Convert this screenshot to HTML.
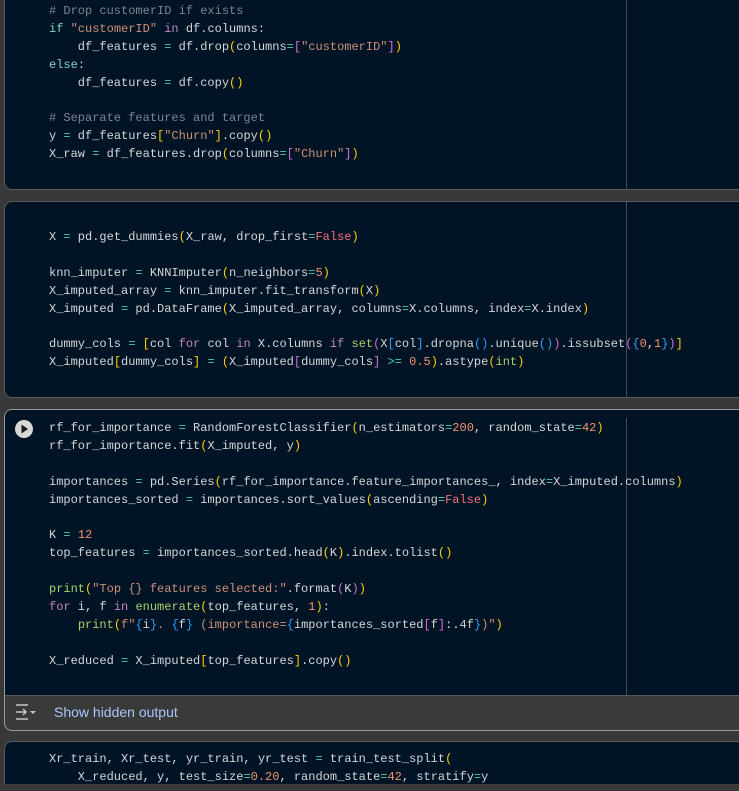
<!DOCTYPE html>
<html><head><meta charset="utf-8"><style>
html,body{margin:0;padding:0;background:#383838;width:739px;height:791px;overflow:hidden;position:relative}
.cell{position:absolute;left:4px;width:760px;background:#001426;border:1px solid #5a5a5a;border-radius:8px;box-sizing:border-box}
.sel{border-color:#9a9a9a}
pre{position:absolute;left:44px;margin:0;font-family:"Liberation Mono",monospace;font-size:12px;line-height:17.9px;color:#d6d6d6;white-space:pre}
.vl{position:absolute;left:621px;width:1px;background:#4a4a4a}
.c{color:#7c858f}.s{color:#ce9178}.n{color:#f0946a}.o{color:#4ec9b0}.y{color:#ffd000}.p{color:#d670d6}.bl{color:#2a9fff}.kw{color:#c586c0}.k{color:#7fd1c7}.f{color:#f0707c}.g{color:#a6d16c}
</style></head><body>
<div class="cell" style="top:-10px;height:200px"><div class="vl" style="top:0;height:200px"></div>
<pre style="top:12px"><span class="c"># Drop customerID if exists</span>
<span class="k">if</span> <span class="s">"customerID"</span> <span class="kw">in</span> df.columns:
    df_features <span class="o">=</span> df.drop<span class="y">(</span>columns<span class="o">=</span><span class="p">[</span><span class="s">"customerID"</span><span class="p">]</span><span class="y">)</span>
<span class="k">else</span>:
    df_features <span class="o">=</span> df.copy<span class="y">()</span>

<span class="c"># Separate features and target</span>
y <span class="o">=</span> df_features<span class="y">[</span><span class="s">"Churn"</span><span class="y">]</span>.copy<span class="y">()</span>
X_raw <span class="o">=</span> df_features.drop<span class="y">(</span>columns<span class="o">=</span><span class="p">[</span><span class="s">"Churn"</span><span class="p">]</span><span class="y">)</span></pre></div>

<div class="cell" style="top:201px;height:197px"><div class="vl" style="top:0;height:197px"></div>
<pre style="top:27px">X <span class="o">=</span> pd.get_dummies<span class="y">(</span>X_raw, drop_first<span class="o">=</span><span class="f">False</span><span class="y">)</span>

knn_imputer <span class="o">=</span> KNNImputer<span class="y">(</span>n_neighbors<span class="o">=</span><span class="n">5</span><span class="y">)</span>
X_imputed_array <span class="o">=</span> knn_imputer.fit_transform<span class="y">(</span>X<span class="y">)</span>
X_imputed <span class="o">=</span> pd.DataFrame<span class="y">(</span>X_imputed_array, columns<span class="o">=</span>X.columns, index<span class="o">=</span>X.index<span class="y">)</span>

dummy_cols <span class="o">=</span> <span class="y">[</span>col <span class="kw">for</span> col <span class="kw">in</span> X.columns <span class="kw">if</span> <span class="g">set</span><span class="p">(</span>X<span class="bl">[</span>col<span class="bl">]</span>.dropna<span class="bl">()</span>.unique<span class="bl">()</span><span class="p">)</span>.issubset<span class="p">(</span><span class="bl">{</span><span class="n">0</span>,<span class="n">1</span><span class="bl">}</span><span class="p">)</span><span class="y">]</span>
X_imputed<span class="y">[</span>dummy_cols<span class="y">]</span> <span class="o">=</span> <span class="y">(</span>X_imputed<span class="p">[</span>dummy_cols<span class="p">]</span> <span class="o">&gt;=</span> <span class="n">0.5</span><span class="y">)</span>.astype<span class="y">(</span><span class="g">int</span><span class="y">)</span></pre></div>

<div class="cell sel" style="top:409px;height:322px;background:#3a3a3a">
<div style="position:absolute;left:0;top:0;right:0;height:285px;background:#001426;border-radius:7px 7px 0 0;border-bottom:1px solid #5a5a5a"></div>
<div class="vl" style="top:8px;height:277px"></div>
<svg style="position:absolute;left:9px;top:9px" width="20" height="20" viewBox="0 0 20 20"><circle cx="10" cy="10" r="9" fill="#d8d8d8"/><path d="M7.5 5.5 L14 10 L7.5 14.5 Z" fill="#1a1a1a"/></svg>
<pre style="top:10px">rf_for_importance <span class="o">=</span> RandomForestClassifier<span class="y">(</span>n_estimators<span class="o">=</span><span class="n">200</span>, random_state<span class="o">=</span><span class="n">42</span><span class="y">)</span>
rf_for_importance.fit<span class="y">(</span>X_imputed, y<span class="y">)</span>

importances <span class="o">=</span> pd.Series<span class="y">(</span>rf_for_importance.feature_importances_, index<span class="o">=</span>X_imputed.columns<span class="y">)</span>
importances_sorted <span class="o">=</span> importances.sort_values<span class="y">(</span>ascending<span class="o">=</span><span class="f">False</span><span class="y">)</span>

K <span class="o">=</span> <span class="n">12</span>
top_features <span class="o">=</span> importances_sorted.head<span class="y">(</span>K<span class="y">)</span>.index.tolist<span class="y">()</span>

<span class="g">print</span><span class="y">(</span><span class="s">"Top {} features selected:"</span>.format<span class="p">(</span>K<span class="p">)</span><span class="y">)</span>
<span class="kw">for</span> i, f <span class="kw">in</span> <span class="g">enumerate</span><span class="y">(</span>top_features, <span class="n">1</span><span class="y">)</span>:
    <span class="g">print</span><span class="y">(</span><span class="s">f"</span><span class="bl">{</span>i<span class="bl">}</span><span class="s">. </span><span class="bl">{</span>f<span class="bl">}</span><span class="s"> (importance=</span><span class="bl">{</span>importances_sorted<span class="p">[</span>f<span class="p">]</span>:.4f<span class="bl">}</span><span class="s">)"</span><span class="y">)</span>

X_reduced <span class="o">=</span> X_imputed<span class="y">[</span>top_features<span class="y">]</span>.copy<span class="y">()</span></pre>
<svg style="position:absolute;left:9px;top:293px" width="24" height="18" viewBox="0 0 24 18" fill="none" stroke="#c8c8c8" stroke-width="1.5"><path d="M2 2h12M2 16h12M2 9h10M9 6l3 3-3 3"/><path d="M16 8h6l-3 3z" fill="#c8c8c8" stroke="none"/></svg>
<div style="position:absolute;left:49px;top:294px;font-family:'Liberation Sans',sans-serif;font-size:14px;color:#a8c7fa">Show hidden output</div>
</div>

<div class="cell" style="top:741px;height:80px">
<pre style="top:9px">Xr_train, Xr_test, yr_train, yr_test <span class="o">=</span> train_test_split<span class="y">(</span>
    X_reduced, y, test_size<span class="o">=</span><span class="n">0.20</span>, random_state<span class="o">=</span><span class="n">42</span>, stratify<span class="o">=</span>y</pre></div>
<div style="position:absolute;left:0;top:784px;width:739px;height:7px;background:#383838"></div>
</body></html>
